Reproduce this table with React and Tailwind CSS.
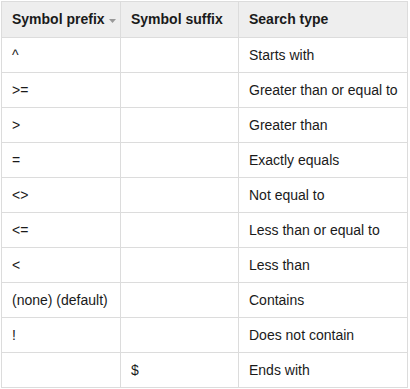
import React from "react";

const rows = [
  ["^", "", "Starts with"],
  [">=", "", "Greater than or equal to"],
  [">", "", "Greater than"],
  ["=", "", "Exactly equals"],
  ["<>", "", "Not equal to"],
  ["<=", "", "Less than or equal to"],
  ["<", "", "Less than"],
  ["(none) (default)", "", "Contains"],
  ["!", "", "Does not contain"],
  ["", "$", "Ends with"],
];

export default function App() {
  return (
    <div className="w-[410px] h-[389px] bg-white pl-[1px] pt-[1px]" style={{ fontFamily: '"Liberation Sans", Arial, sans-serif' }}>
      <div className="grid grid-cols-[119px_118px_169px] border-l border-t border-[#dcdcdc] w-[407px] text-[14px] text-[#1a1a1a]">
        <div className="h-[36px] flex items-center pl-[10px] bg-[#eeeeee] border-r border-b border-[#dcdcdc] font-bold">
          <span>Symbol prefix</span>
          <svg width="7" height="4" viewBox="0 0 7 4" className="ml-[4px] mt-[3px]"><path d="M0 0 L7 0 L3.5 4 Z" fill="#999" /></svg>
        </div>
        <div className="h-[36px] flex items-center pl-[10px] bg-[#eeeeee] border-r border-b border-[#dcdcdc] font-bold">Symbol suffix</div>
        <div className="h-[36px] flex items-center pl-[10px] bg-[#eeeeee] border-r border-b border-[#dcdcdc] font-bold">Search type</div>
        {rows.map((r, i) => (
          <React.Fragment key={i}>
            {r.map((c, j) => (
              <div key={j} className="h-[35px] flex items-center pl-[10px] border-r border-b border-[#dcdcdc] whitespace-nowrap">{c}</div>
            ))}
          </React.Fragment>
        ))}
      </div>
    </div>
  );
}
